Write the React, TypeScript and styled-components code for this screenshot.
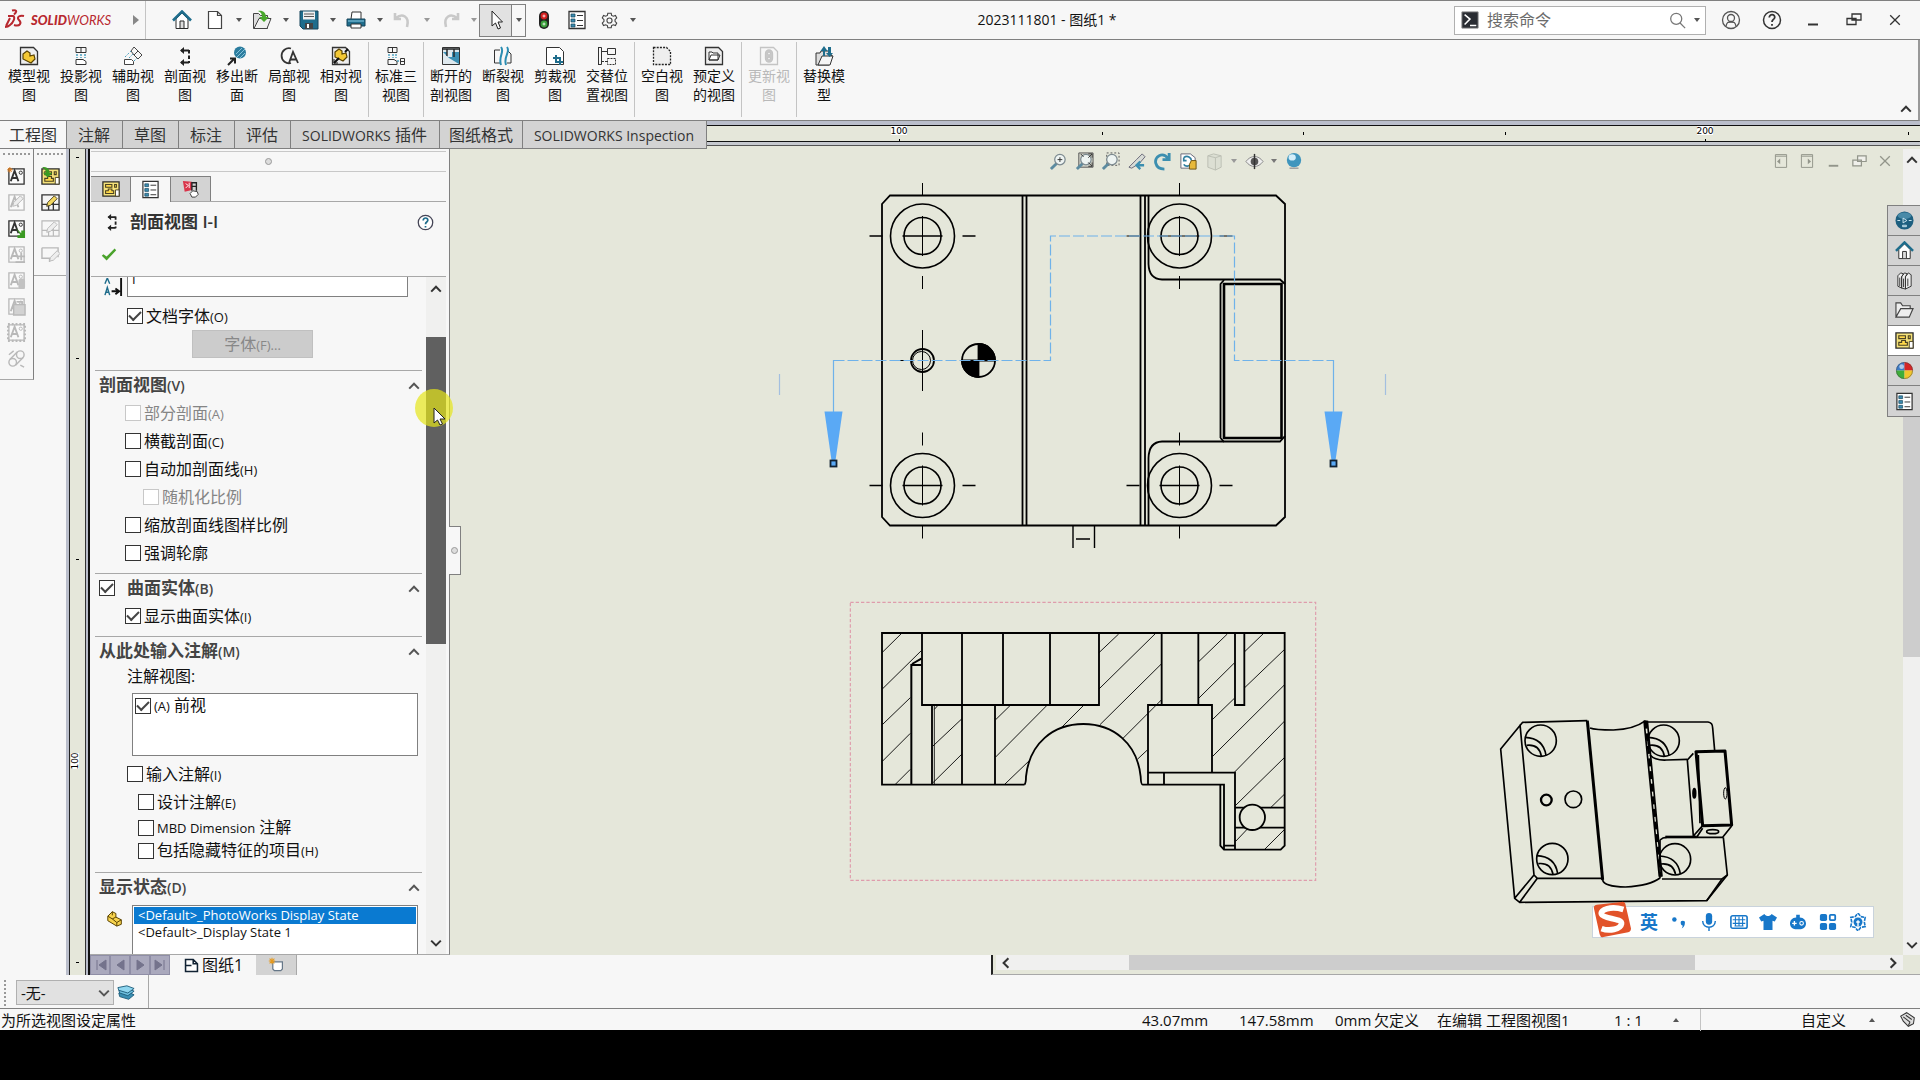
import React from "react";
import styled, { createGlobalStyle, css } from "styled-components";

const C = {
  ui: "#f7f7f7",
  sheet: "#e5e7da",
  tab: "#d3d3d3",
  line: "#a8a8a8",
  dark: "#808080",
  teal: "#1f6d8c",
  ink: "#2b2b2b",
  off: "#b9b9b9",
  blue: "#5aa9f5",
};

const Global = createGlobalStyle`
  * { box-sizing: border-box; }
  body { margin: 0; background: #000; }
  body, button, input, select {
    font-family: "Open Sans", "Noto Sans CJK SC", sans-serif;
    color: #111;
  }
  ul { list-style: none; margin: 0; padding: 0; }
  svg { display: block; flex: none; }
`;

const Page = styled.div`
  min-height: 100vh;
  padding-bottom: 50px;
  display: flex;
  flex-direction: column;
  overflow: hidden;
  background: #000;
`;

const Frame = styled.div`
  flex: 1;
  display: flex;
  flex-direction: column;
  background: ${C.ui};
  border-top: 1px solid ${C.dark};
`;

const Plain = styled.button`
  border: 0;
  padding: 0;
  background: transparent;
  display: flex;
  align-items: center;
  justify-content: center;
`;

/* ---------- icons ---------- */

type IconName =
  | "home" | "new" | "open" | "save" | "print" | "undo" | "redo" | "cursor" | "light" | "options" | "gear"
  | "model" | "proj" | "aux" | "section" | "removed" | "detail" | "relative" | "three" | "brokenOut" | "break"
  | "crop" | "alt" | "blank" | "predef" | "update" | "replace"
  | "noteNew" | "noteEdit" | "noteOut" | "noteAdd" | "noteLight" | "notePaste" | "noteFrame" | "link"
  | "sheetIn" | "sheetEdit" | "sheetOff" | "sheetNote" | "sheet" | "ball" | "x3d" | "books" | "folder" | "red"
  | "part" | "user" | "help" | "helpBlue" | "min" | "restore" | "close" | "search" | "term"
  | "zFit" | "zAll" | "zArea" | "prev" | "rotate" | "view3d" | "cube" | "eye" | "sphere"
  | "dockL" | "dockR" | "page" | "pageAdd" | "layers" | "tagIcon" | "check" | "sizeA"
  | "punct" | "mic" | "keys" | "shirt" | "game" | "apps" | "ai";

const noteA = (c: string) => (
  <g stroke={c} fill="none">
    <path d="M2 2h16v16H2z" fill="#fff" fillOpacity=".4" strokeWidth="1.400" />
    <path d="M4 15l4-11 4 11M5.500 11.500h5" strokeWidth="2" />
    <circle cx="14.500" cy="6" r="1.700" />
  </g>
);
const sheetY = (
  <g>
    <path d="M1 2h18v16H1z" fill="#f5e27a" stroke={C.ink} strokeWidth="1.400" />
    <path d="M4 5h7v3H4zM14 5h2v3h-2zM4 15v-3h3V10h4v2h2v3z" fill="#ffd94a" stroke="#4a4223" strokeWidth="1.200" />
    <path d="M15 11h4v7h-4z" fill="#fff" stroke="#4a4223" />
  </g>
);
const partY = (x = 0, y = 0) => (
  <path transform={`translate(${x} ${y})`} d="M4 6l4-3 3 2v3l4-1 1 4-4 4-8-4z" fill="#f4c935" stroke="#5a4300" strokeWidth="1.200" />
);
const pen = (c: string, f: string) => <path d="M6 14l1-4 7-7 3 3-7 7z" fill={f} stroke={c} />;
const mag = (
  <g>
    <path d="M2 18l6-6" stroke="#5c8ba0" strokeWidth="3" />
    <circle cx="11.500" cy="8" r="5.500" fill="#eef4f2" stroke="#7c8a90" strokeWidth="1.300" />
  </g>
);

const ICONS: Record<IconName, React.ReactNode> = {
  home: (
    <g>
      <path d="M4 9v9.500h12V9l-6-6z" fill="#fff" stroke={C.ink} />
      <path d="M1 10.500L10 1.500l9 9" stroke={C.teal} strokeWidth="2.600" fill="none" />
      <path d="M8 18v-7h4v7" stroke={C.ink} fill="#ddd" />
    </g>
  ),
  new: <path d="M3.500 1.500h9l4 4v13h-13zM12.500 1.500v4h4" fill="#fff" stroke="#444" strokeWidth="1.200" />,
  open: (
    <g>
      <path d="M1.500 18.500V3.500h5l2 2h7v13z" fill="#ddd" stroke="#444" />
      <path d="M2 18.500L7 8.500h12l-4 10z" fill="#f1f1f1" stroke="#444" />
      <path d="M6 1c5-1 8 2 8 6h3l-5 5-5-5h3c0-3-1-5-4-6z" fill="#49a82c" />
    </g>
  ),
  save: (
    <g>
      <path d="M1 1h18v18H4l-3-3z" fill={C.teal} stroke="#16455a" />
      <path d="M4 1.500h12v8H4z" fill="#f0f0f0" />
      <path d="M5 4h10M5 6.500h10" stroke="#555" />
      <path d="M6 13h8v6H6z" fill="#444" />
      <path d="M8 14h2v4H8z" fill="#fff" />
    </g>
  ),
  print: (
    <g>
      <path d="M5 9l1-7h9v7" fill="#fff" stroke="#333" />
      <path d="M1 9h18v7H1z" fill={C.teal} stroke="#16455a" />
      <path d="M5 14h10v4H5z" fill="#fff" stroke="#333" />
      <path d="M2 11h16" stroke="#8fd0e8" />
    </g>
  ),
  undo: <path d="M2 3v6h6M3 8c6-5 14-2 11 9" fill="none" stroke="#c9c9c9" strokeWidth="2.600" />,
  redo: <path d="M18 3v6h-6M17 8C11 3 3 6 6 17" fill="none" stroke="#c9c9c9" strokeWidth="2.600" />,
  cursor: <path d="M6 1v15l3.500-3 2.500 6 2.500-1-2.500-6h4.500z" fill="#fff" stroke="#222" />,
  light: (
    <g>
      <rect x="5" y="1" width="10" height="18" rx="5" fill="#222" />
      <circle cx="10" cy="6" r="3.400" fill="#d42020" />
      <circle cx="10" cy="14" r="3.400" fill="#3ca03c" />
      <path d="M8.500 6h3M10 4.500v3M8.500 14h3M10 12.500v3" stroke="#fff" strokeWidth=".8" />
    </g>
  ),
  options: (
    <g>
      <path d="M2 1.500h16v17H2z" fill="#fff" stroke="#333" strokeWidth="1.300" />
      <path d="M4 4h4v3H4zM4 9h4v3H4zM4 14h4v3H4z" fill="#3b8bb0" stroke="#16455a" strokeWidth=".7" />
      <path d="M10 5.500h6M10 10.500h6M10 15.500h6" stroke="#333" />
    </g>
  ),
  gear: (
    <g fill="none" stroke="#444" strokeWidth="1.300">
      <circle cx="10" cy="10" r="3" />
      <path d="M8 1.500h4l.5 2.500 2 1 2.500-1 1.500 3-2 2v2l2 2-1.500 3-2.500-1-2 1-.5 2.500H8L7.500 16l-2-1-2.500 1-1.500-3 2-2V9l-2-2L3 4l2.500 1 2-1z" />
    </g>
  ),
  model: (
    <g>
      <path d="M1.500 1.500h13l4 4v13h-17z" fill="#eee" stroke="#333" strokeWidth="1.300" />
      {partY(0, 2)}
    </g>
  ),
  proj: (
    <g fill="none" stroke="#333">
      <path d="M5 1.500h10v5H5zM10 1.500v5" />
      <path d="M6 8v4M10 8v4M14 8v4" stroke="#49a0bf" strokeWidth="1.500" strokeDasharray="2 1" />
      <path d="M5 13.500h7l3 2v3H5z" fill="#fff" />
    </g>
  ),
  aux: (
    <g fill="none" stroke="#444">
      <path d="M1.500 13.500h7l2 2v3h-9z" fill="#fff" />
      <path d="M11 1l4 4-4 4-3-4zM15 5l4 4-4 4-4-4z" />
      <path d="M2 11l6-6M6 12l4-4M11 15l3-3" stroke="#49a0bf" strokeDasharray="2 1.500" />
    </g>
  ),
  section: (
    <g fill="none" stroke="#222" strokeWidth="2">
      <path d="M14 4.500H6M14 16.500H6" />
      <path d="M9 1L5 4.500 9 8zM9 13l-4 3.500L9 20z" fill="#222" stroke="none" />
      <path d="M14 4v13" strokeDasharray="3.500 2" />
    </g>
  ),
  removed: (
    <g>
      <circle cx="13" cy="6.500" r="6" fill="#2b7c9e" />
      <path d="M9 8l6-6M10 11l8-8M13 12l5-5" stroke="#9cd3e8" strokeWidth=".8" />
      <path d="M1 19l6-6M3 12.500h5v5" stroke="#222" strokeWidth="2" fill="none" />
    </g>
  ),
  detail: (
    <g fill="none" stroke="#333">
      <path d="M12 2.500A7.500 7.500 0 1 0 12 17" strokeWidth="1.800" />
      <path d="M10 17l4-11 5 11M11.500 13.500h6" strokeWidth="1.800" />
    </g>
  ),
  relative: (
    <g>
      <path d="M1.500 1.500h13l4 4v13h-17z" fill="#eee" stroke="#333" strokeWidth="1.300" />
      {partY(0, 0)}
      <path d="M3 17l5-5M17 3l-3 3" stroke="#111" strokeWidth="2" />
      <path d="M3 13v4h4" fill="none" stroke="#111" />
    </g>
  ),
  three: (
    <g fill="none" stroke="#333">
      <path d="M2 1.500h9v5H2zM6.500 1.500v5" />
      <path d="M3 8v4M7 8v4M10 8v4M11 15h3" stroke="#49a0bf" strokeWidth="1.400" strokeDasharray="2 1" />
      <path d="M2 13.500h6l3 2v3H2zM14.500 12.500h4v6h-4zM14.500 15.500h4" />
    </g>
  ),
  brokenOut: (
    <g>
      <path d="M1.500 1.500h17v17h-17z" fill="#dfe9ee" stroke="#333" />
      <path d="M2 6h4v5h5V6h7v12L8 12z" fill="#3b8fb3" />
      <path d="M1 3h18M6 3v7M13 3v8" stroke="#222" strokeWidth="1.400" />
    </g>
  ),
  break: (
    <g fill="none">
      <path d="M7 4H1.500v13H7M14 4l4 4v9h-4" stroke="#333" />
      <path d="M8 1c4 5-3 9 0 18M14 1c4 5-4 9-1 18" stroke="#2b8db3" strokeWidth="2" />
    </g>
  ),
  crop: (
    <g fill="none">
      <path d="M1.500 1.500h13l4 4v13h-17z" fill="#fff" stroke="#333" />
      <path d="M11 9v7h7M8 12h7v7" stroke={C.teal} strokeWidth="2" />
    </g>
  ),
  alt: (
    <g fill="none" stroke="#333">
      <path d="M1.500 1v18M1.500 1.500h3v17h-3" />
      <path d="M10.500 2.500h8v6h-8zM5 5.500h5" />
      <path d="M10.500 12.500h8v6h-8zM5 15.500h5" strokeDasharray="2 1" />
    </g>
  ),
  blank: <path d="M1.500 1.500h13l4 4v13h-17z" fill="#eee" stroke="#222" strokeWidth="1.300" strokeDasharray="2 1.200" />,
  predef: (
    <g>
      <path d="M1.500 1.500h13l4 4v13h-17z" fill="#eee" stroke="#333" strokeWidth="1.300" />
      <path d="M5 14V6h3l1 1h5v7zM5 14l2-5h9l-2 5z" fill="#fff" stroke="#333" />
    </g>
  ),
  update: (
    <g fill="none" stroke="#c4c4c4" strokeWidth="1.300">
      <path d="M1.500 1.500h13l4 4v13h-17z" />
      <rect x="6.500" y="4" width="7" height="12" rx="3.500" fill="#c9c9c9" />
      <circle cx="10" cy="7.500" r="1.500" fill="#f7f7f7" />
      <circle cx="10" cy="12.500" r="1.500" fill="#f7f7f7" />
    </g>
  ),
  replace: (
    <g>
      <path d="M2 19V7h4l1-2h8v4h3l-3 10z" fill="#ddd" stroke="#333" />
      <path d="M4 19l4-9h11l-3 9z" fill="#f5f5f5" stroke="#333" />
      <path d="M9 10V5H6.500L10 0l3.500 5H11v5zM14 1v6h-2l3.500 4L19 7h-2V1z" fill={C.teal} />
    </g>
  ),
  noteNew: <g>{noteA("#333")}<path d="M3 0v6M0 3h6M1 1l4 4M5 1L1 5" stroke="#e08020" /></g>,
  noteEdit: <g>{noteA(C.off)}{pen(C.off, "#eee")}</g>,
  noteOut: <g>{noteA("#333")}<path d="M10 10l5 5V12h4v8h-8v-3h3z" fill="#3a9a22" /></g>,
  noteAdd: <g>{noteA(C.off)}<path d="M15 8v8M11 12h8M9 18h10" stroke={C.off} strokeWidth="2" /></g>,
  noteLight: <g>{noteA(C.off)}<rect x="12" y="8" width="7" height="11" rx="3" fill="#c2c2c2" /></g>,
  notePaste: <g>{noteA(C.off)}<path d="M7 8h12v11H7zM10 5h6v3" fill="#d2d2d2" stroke={C.off} strokeWidth="1.500" /></g>,
  noteFrame: <g>{noteA(C.off)}<path d="M1 1h18v18H1z" fill="none" stroke={C.off} strokeWidth="2.500" strokeDasharray="2 2" /></g>,
  link: (
    <g fill="none" stroke={C.off} strokeWidth="1.500">
      <circle cx="6" cy="14" r="4" /><circle cx="14" cy="6" r="4" />
      <path d="M3 11l8-8M9 17l8-8M2 6l5-4M14 17l4 2" />
    </g>
  ),
  sheetIn: <g>{sheetY}<path d="M1 0c6 0 8 2 8 6h3l-5 5-5-5h3c0-3-1-4-4-6z" fill="#3a9a22" /></g>,
  sheetEdit: <g><path d="M1 2h18v16H1zM1 12h18M8 12v6M13 9v9" fill="#f5f5f5" stroke="#333" strokeWidth="1.400" />{pen("#4a4223", "#f4d860")}</g>,
  sheetOff: <g><path d="M1 2h18v16H1zM1 12h18M8 12v6M13 9v9" fill="none" stroke={C.off} strokeWidth="1.200" />{pen(C.off, "#eee")}</g>,
  sheetNote: <g><path d="M1 3h17v10M1 3v11h8v4" fill="none" stroke={C.off} strokeWidth="1.500" /><g transform="translate(3 3)">{pen(C.off, "#eee")}</g></g>,
  sheet: sheetY,
  ball: (
    <g>
      <path d="M10 10V1a9 9 0 0 0-9 9z" fill="#3c7bc8" /><path d="M10 10h9a9 9 0 0 0-9-9z" fill="#d52626" />
      <path d="M10 10H1a9 9 0 0 0 9 9z" fill="#3fae3a" /><path d="M10 10v9a9 9 0 0 0 9-9z" fill="#f2c62c" />
      <circle cx="7" cy="6" r="2.500" fill="#fff" opacity=".6" />
      <circle cx="10" cy="10" r="8.500" fill="none" stroke="#444" opacity=".5" />
    </g>
  ),
  x3d: (
    <g>
      <circle cx="10" cy="10" r="9.500" fill="#1d5f80" /><ellipse cx="10" cy="5" rx="7" ry="3.500" fill="#5c9db9" opacity=".7" />
      <path d="M8.500 7.500l4 2.500-4 2.500zM8 15h4v1.500H8z" stroke="#cfe8f2" fill="none" />
      <path d="M2.500 10h3M14.500 10h3" stroke="#cfe8f2" />
    </g>
  ),
  books: (
    <g fill="#eee" stroke="#333">
      <path d="M3 5l3-3 3 1-2 3v12l-4-2zM7 6l3-4 3 1-2 3v13l-4-1zM11 6l3-4 3 2v12l-6 3z" />
      <path d="M5 7v9M9 8v9M13.500 8v8" />
    </g>
  ),
  folder: <path d="M1 17V2h5l2 3h8v3M1 17L6 8h13l-4 9z" fill="#eee" stroke="#444" strokeWidth="1.200" />,
  red: (
    <g>
      <path d="M1 1l10 1v9l-8 2z" fill="#d9344a" />
      <path d="M4 4l3 2-3 3M8 3v6" stroke="#fff" fill="none" />
      <path d="M11 12V3h5v9M11 7h5" stroke="#222" fill="none" strokeWidth="1.500" />
      <path d="M9 15l3-3 5 1 1 3-3 3h-4z" fill="#fff" stroke="#333" />
    </g>
  ),
  part: (
    <g stroke="#5a4300" strokeWidth="1.100">
      <path d="M2 8l5-5 4 2v4l6 3v5l-5 2-10-6z" fill="#f7d34c" />
      <path d="M2 8l5 3 4-2M7 11l5 4 5-3M12 15v4M7 3v4" fill="none" />
    </g>
  ),
  user: (
    <g fill="none" stroke="#555" strokeWidth="1.300">
      <circle cx="10" cy="10" r="8.500" /><circle cx="10" cy="8" r="3.500" /><path d="M5 16c1-4 2-4 5-4s4 0 5 4" />
    </g>
  ),
  help: <g><circle cx="10" cy="10" r="8.500" fill="none" stroke="#333" strokeWidth="1.500" /><path d="M7.300 7.500c0-4 5.800-3.500 5.400 0-.2 2-2.700 2-2.700 4.500M10 14v1.800" fill="none" stroke="#333" strokeWidth="1.800" /></g>,
  helpBlue: <g><circle cx="10" cy="10" r="8.500" fill="#fff" stroke="#445" strokeWidth="1.500" /><path d="M7.300 7.500c0-4 5.800-3.500 5.400 0-.2 2-2.700 2-2.700 4.500M10 14v1.800" fill="none" stroke={C.teal} strokeWidth="2" /></g>,
  min: <path d="M5 14.500h10" stroke="currentColor" strokeWidth="2" />,
  restore: <path d="M8 4h9v6H8zM3 8.500h9v6H3z" fill={C.ui} fillOpacity=".6" stroke="currentColor" strokeWidth="1.300" />,
  close: <path d="M4 4l12 12M16 4L4 16" stroke="currentColor" strokeWidth="1.600" />,
  search: <g fill="none" stroke="#777" strokeWidth="1.500"><circle cx="8.500" cy="8" r="6.500" /><path d="M13 13l6 6" /></g>,
  term: <g><path d="M1 1h18v18H1z" fill="#2a2d33" stroke="#888" /><path d="M4 4l6 5-6 6M10 16h7" fill="none" stroke="#fff" strokeWidth="1.700" /></g>,
  zFit: <g>{mag}<path d="M9 8h5M11.500 5.500v5" stroke="#333" /></g>,
  zAll: <g><path d="M4 1h15v15H4z" fill="#d5d7cc" stroke="#555" />{mag}<path d="M14 2h4v4M18 11v4h-4M6 2l3 3M18 2l-4 4M18 15l-4-4" fill="none" stroke="#333" /></g>,
  zArea: <g><path d="M6 1h13v13H6z" fill="none" stroke="#555" strokeDasharray="2 2" />{mag}</g>,
  prev: <g><path d="M2 16l8-8 6-6 3 3-6 7-8 5z" fill="#d8dcd6" stroke="#667" /><path d="M18 14h-7M14 10l-4 4 4 4" stroke="#3c8fb0" strokeWidth="2.500" fill="none" /></g>,
  rotate: <path d="M17 1v7h-7M16 7C10-1 1 5 3 12c1 4 5 6 9 6" fill="none" stroke="#3c8fb0" strokeWidth="3" />,
  view3d: <g><path d="M2 2h10l5 4v11H2z" fill="#fff" stroke="#667" /><path d="M5 6c4-3 8 0 8 3M5 13c2 3 6 2 7 0M5 6v3h3" fill="none" stroke="#2f7f9f" strokeWidth="1.800" /><path d="M13 9h5v9h-7v-5z" fill="#e7b93a" stroke="#6d5210" /></g>,
  cube: <g fill="#dcdfd3" stroke="#bcbfb3"><path d="M3 4l6-2 8 2v12l-6 3-8-3z" /><path d="M11 6v13M3 4l8 2 6-2" fill="none" /></g>,
  eye: <g><path d="M1 10c5-7 13-7 18 0-5 7-13 7-18 0z" fill="#eee" stroke="#888" /><circle cx="10" cy="10" r="4" fill="#555" /><path d="M10 2v16" stroke="#333" strokeWidth="1.500" /></g>,
  sphere: <g><circle cx="10" cy="9" r="8" fill="#3f95bd" /><ellipse cx="8" cy="6" rx="4" ry="3.500" fill="#d3eefa" /><path d="M5 18h10" stroke="#999" strokeWidth="1.500" /></g>,
  dockL: <g fill="none" stroke="currentColor" strokeWidth="1.200"><path d="M3 2h14v16H3zM3 4h14" /><path d="M9 7v7l-4-3.500z" fill="currentColor" stroke="none" /></g>,
  dockR: <g fill="none" stroke="currentColor" strokeWidth="1.200"><path d="M3 2h14v16H3zM3 4h14" /><path d="M11 7v7l4-3.500z" fill="currentColor" stroke="none" /></g>,
  page: <path d="M3 3h9l5 5v9H3zM12 3v5h5M3 10h7" fill="#fff" stroke="#123" strokeWidth="1.800" />,
  pageAdd: <g><path d="M6 6h12v9l-2 2H8l-2-2z" fill="#fff" stroke="#678" strokeWidth="1.500" /><path d="M5 1v8M1 5h8M2 2l6 6M8 2L2 8" stroke="#e59a20" strokeWidth="1.300" /></g>,
  layers: <g stroke="#1b5a78"><path d="M2 10l9-2 8 4-6 5-10-3z" fill="#3b8fb3" /><path d="M2 7l9-3 8 4-7 5-9-3z" fill="#6fc0df" /><path d="M1 4l10-2 8 3-7 5-10-3z" fill="#8fd6ef" /></g>,
  tagIcon: <g fill="#ddd" stroke="#333" strokeWidth="1.200"><path d="M2 6l7-4 9 6-1 7-6 3-6-6z" /><path d="M5 7l8 6M8 5l7 5M13 13l-2 4" fill="none" /></g>,
  check: <path d="M1 11l6 6L19 4l-2-2L7 12l-4-3z" fill="#4aa32c" />,
  sizeA: <g fill="none" stroke={C.teal} strokeWidth="1.500"><path d="M1 6l2.500-6L6 6M1 18l2.500-8L6 18M2 15h3" /><path d="M8 14h8M12 11l4 3-4 3M18 0v19" stroke="#111" strokeWidth="2" /></g>,
  punct: <g fill="#1777c9"><circle cx="4.500" cy="6" r="3" /><path d="M13 11a2.800 2.800 0 1 1 5.500 0c0 3-2 6-4.500 7 1-1 1.500-2 1.500-4-1.500 0-2.500-1.500-2.500-3z" /></g>,
  mic: <g fill="#1777c9"><rect x="6.500" y="0" width="7" height="13" rx="3.500" /><path d="M3 9c0 9 14 9 14 0M10 16v4" fill="none" stroke="#1777c9" strokeWidth="1.600" /></g>,
  keys: <g fill="none" stroke="#1777c9"><rect x="1" y="3" width="18" height="14" rx="2" strokeWidth="1.800" /><path d="M3 7.500h14M3 11.500h14M6 4v10M10 4v10M14 4v10M5 14.500h10" strokeWidth="1.200" /></g>,
  shirt: <path d="M6 1c2 3 6 3 8 0l6 4-2.500 4.500L15 8.500V19H5V8.500L2.500 9.500 0 5z" fill="#1777c9" />,
  game: <g><path d="M8 5V2h4v3c9 0 9 13 1 13H7C-1 18-1 5 8 5z" fill="#1777c9" /><path d="M3.500 11.500h5M6 9v5" stroke="#fff" strokeWidth="1.500" /><circle cx="14" cy="11.500" r="2" fill="none" stroke="#fff" strokeWidth="1.200" /></g>,
  apps: <g fill="#1777c9"><rect x="1" y="1" width="8" height="8" rx="2" /><rect x="12" y="2" width="6" height="6" rx="1" fill="none" stroke="#1777c9" strokeWidth="2" /><rect x="1" y="11" width="8" height="8" rx="2" /><rect x="11" y="11" width="8" height="8" rx="2" /></g>,
  ai: <g><path d="M10 0l3 4 5 1-1 5 1 5-5 1-3 4-3-4-5-1 1-5-1-5 5-1z" fill="none" stroke="#1777c9" strokeWidth="1.800" strokeDasharray="4 1" /><circle cx="10" cy="10" r="5" fill="#1777c9" /><path d="M10 8v7M8 10h4" stroke="#fff" strokeWidth="1.500" /></g>,
};

const Icon = ({ name, size = 20 }: { name: IconName; size?: number }) => (
  <svg width={size} height={size} viewBox="0 0 20 20" aria-hidden="true">{ICONS[name]}</svg>
);

const Chevron = ({ dir = "up", color = "#333" }: { dir?: "up" | "down" | "left" | "right"; color?: string }) => {
  const d = { up: "M1 8l4-4 4 4", down: "M1 3l4 4 4-4", left: "M7 1L3 5l4 4", right: "M3 1l4 4-4 4" }[dir];
  return <svg width="12" height="12" viewBox="0 0 10 10" aria-hidden="true"><path d={d} fill="none" stroke={color} strokeWidth="1.700" /></svg>;
};

const Caret = ({ up = false, color = "#555" }: { up?: boolean; color?: string }) => (
  <svg width="6" height="4" viewBox="0 0 6 4" aria-hidden="true"><path d={up ? "M0 4h6L3 0z" : "M0 0h6L3 4z"} fill={color} /></svg>
);

/* ---------- title bar ---------- */

const TitleBar = styled.header`
  height: 39px;
  display: flex;
  align-items: center;
  border-bottom: 1px solid ${C.dark};
`;
const Brand = styled.div`
  width: 146px;
  height: 100%;
  padding: 0 6px 0 4px;
  display: flex;
  align-items: center;
  gap: 5px;
  border-right: 1px solid #c4c4c4;
  color: #b8282f;
`;
const BrandName = styled.span`
  flex: 1;
  font: italic 400 13px/20px "Lato", sans-serif;
  b { font-weight: 900; }
`;
const QuickBar = styled.div`
  display: flex;
  align-items: center;
  padding-left: 25px;
`;
const QuickButton = styled(Plain)<{ $w?: number }>`
  width: ${(p) => p.$w ?? 22}px;
  height: 32px;
`;
const SelectTool = styled.div`
  display: flex;
  margin: 0 1px 0 4px;
  border: 1px solid ${C.dark};
  button { height: 31px; }
  button:first-child { width: 32px; background: #e2e2e2; border-right: 1px solid ${C.dark}; }
  button:last-child { width: 13px; }
`;
const DocTitle = styled.h1`
  flex: 1;
  margin: 0;
  text-align: center;
  font-size: 14px;
  line-height: 20px;
  font-weight: 400;
`;
const SearchBox = styled.label`
  width: 252px;
  height: 29px;
  display: flex;
  align-items: center;
  gap: 8px;
  padding: 0 5px 0 6px;
  background: #fff;
  border: 1px solid #b0b0b0;
  input {
    flex: 1;
    min-width: 0;
    padding: 0;
    border: 0;
    outline: 0;
    font-size: 16px;
    line-height: 20px;
    background: transparent;
  }
  input::placeholder { color: #6b6b6b; opacity: 1; }
`;
const WindowButtons = styled.div`
  display: flex;
  padding: 0 5px 0 4px;
  color: #333;
  button { width: 41px; height: 32px; color: inherit; }
`;

/* ---------- ribbon ---------- */

const Ribbon = styled.div`
  height: 81px;
  display: flex;
  padding-left: 2px;
  border-bottom: 1px solid ${C.dark};
  border-right: 2px solid #999;
`;
const RibbonGroup = styled.div`
  display: flex;
  margin: 2px 0 3px;
  padding: 0 1px;
  border-right: 1px solid #c4c4c4;
  &:last-of-type { border-right: 0; }
`;
const RibbonButton = styled(Plain)`
  width: 52px;
  padding-top: 4px;
  flex-direction: column;
  justify-content: flex-start;
  font-size: 14px;
  line-height: 19px;
  &:disabled { color: ${C.off}; }
  span { width: 42px; }
`;
const Collapse = styled(Plain)`
  margin-left: auto;
  width: 24px;
  height: 24px;
  align-self: flex-end;
`;

const ribbon: [IconName, string, boolean?][][] = [
  [["model", "模型视图"], ["proj", "投影视图"], ["aux", "辅助视图"], ["section", "剖面视图"], ["removed", "移出断面"], ["detail", "局部视图"], ["relative", "相对视图"]],
  [["three", "标准三视图"]],
  [["brokenOut", "断开的剖视图"], ["break", "断裂视图"], ["crop", "剪裁视图"], ["alt", "交替位置视图"]],
  [["blank", "空白视图"], ["predef", "预定义的视图"]],
  [["update", "更新视图", true]],
  [["replace", "替换模型"]],
];

/* ---------- tabs and ruler ---------- */

const TabRow = styled.div`
  display: flex;
  height: 28px;
  background: ${C.sheet};
`;
const Tabs = styled.nav`
  display: flex;
  border-bottom: 1px solid ${C.dark};
`;
const Tab = styled.button<{ $active?: boolean; $tight?: boolean }>`
  padding: ${(p) => (p.$tight ? "0 9px" : "0 12px 0 11px")};
  border: 0;
  border-right: 1px solid ${C.dark};
  background: ${(p) => (p.$active ? C.ui : C.tab)};
  font-size: 16px;
  line-height: 26px;
  white-space: nowrap;
  color: #333;
  small { font-size: 14px; line-height: 20px; }
`;
const RulerH = styled.svg`
  flex: 1 1 0;
  min-width: 0;
  height: 25px;
`;

const HorizontalRuler = () => (
  <RulerH role="img" aria-label="ruler">
    <rect width="100%" height="4" fill="#babecb" />
    <rect y="4" width="100%" height="1" fill="#111" />
    <rect y="20" width="100%" height="1" fill="#111" />
    <rect y="21" width="100%" height="4" fill="#c6c9cf" />
    <rect y="24" width="100%" height="1" fill="#555" />
    {[192, 998].map((x, i) => (
      <g key={x}>
        <rect x={x - 8} y="5" width="16" height="9" fill="#fff" />
        <text x={x} y="13" fontSize="9" textAnchor="middle" fontFamily="DejaVu Sans, sans-serif">{(i + 1) * 100}</text>
        <rect x={x} y="18" width="1" height="2" />
      </g>
    ))}
    {[395, 596, 798, 1201].map((x) => <rect key={x} x={x} y="11" width="1" height="3" />)}
  </RulerH>
);

/* ---------- body ---------- */

const Body = styled.div`
  flex: 1;
  display: flex;
  min-height: 0;
`;
const ToolColumn = styled.div<{ $side?: boolean }>`
  width: ${(p) => (p.$side ? 32 : 34)}px;
  align-self: flex-start;
  padding: 4px 0 8px;
  ${(p) => !p.$side && css`border-right: 1px solid ${C.dark};`}
  border-bottom: 1px solid ${C.line};
  button { width: 32px; height: 26px; }
`;
const Grip = styled.div<{ $vertical?: boolean }>`
  ${(p) => p.$vertical
    ? css`width: 0; height: 26px; border-left: 2px dotted #999;`
    : css`height: 0; margin: 0 3px 8px; border-top: 2px dotted #999;`}
`;
const RulerV = styled.svg`
  width: 24px;
  height: auto;
  align-self: stretch;
`;
const VerticalRuler = () => (
  <RulerV role="img" aria-label="ruler">
    <rect width="24" height="100%" fill={C.sheet} />
    <rect width="3" height="100%" fill="#babecb" />
    <rect x="3" width="1" height="100%" fill="#222" />
    <rect x="19" width="1" height="100%" fill="#333" />
    <rect x="20" width="3" height="100%" fill="#babecb" />
    <rect x="22" width="2" height="100%" fill="#111" />
    {[8, 209, 410, 813].map((y) => <rect key={y} x="10" y={y} width="3" height="1" />)}
    <rect x="5" y="604" width="8" height="16" fill="#fff" />
    <text transform="translate(12 612) rotate(-90)" fontSize="9" textAnchor="middle" fontFamily="DejaVu Sans, sans-serif">100</text>
  </RulerV>
);
const Right = styled.div`
  flex: 1;
  min-width: 0;
  display: flex;
  flex-direction: column;
`;
const Workspace = styled.div`
  position: relative;
  flex: 1;
  display: flex;
  min-height: 0;
`;

/* ---------- property panel ---------- */

const Panel = styled.aside`
  position: relative;
  z-index: 1;
  width: 360px;
  display: flex;
  flex-direction: column;
  padding: 2px 3px 0 1px;
  background: ${C.ui};
  border-right: 1px solid ${C.dark};
  border-bottom: 1px solid ${C.line};
`;
const PanelGrip = styled.div`
  height: 21px;
  display: flex;
  align-items: center;
  justify-content: center;
  border-top: 1px solid #c8c8c8;
  border-bottom: 1px solid #c8c8c8;
`;
const Dot = styled.i`
  width: 7px;
  height: 7px;
  border: 1px solid #999;
  border-radius: 50%;
  background: #ddd;
`;
const PanelTabs = styled.div`
  display: flex;
  margin-top: 4px;
  height: 26px;
  border-bottom: 1px solid ${C.line};
`;
const PanelTab = styled(Plain)<{ $active?: boolean }>`
  width: 40px;
  height: ${(p) => (p.$active ? 26 : 25)}px;
  background: ${(p) => (p.$active ? C.ui : C.tab)};
  border: solid ${C.dark};
  border-width: 1px 1px 0 0;
`;
const PanelHead = styled.div`
  height: 75px;
  padding: 8px 12px 0 10px;
  border-bottom: 1px solid ${C.line};
`;
const PanelTitle = styled.div`
  display: flex;
  align-items: center;
  height: 24px;
  padding-left: 2px;
  h2 {
    flex: 1;
    margin: 0 0 0 9px;
    font-size: 17px;
    line-height: 24px;
    font-weight: 600;
    color: #333;
  }
`;
const PanelOk = styled(Plain)`
  margin-top: 13px;
`;
const PanelScroll = styled.div`
  flex: 1 1 0;
  min-height: 0;
  display: flex;
  overflow: hidden;
`;
const PanelContent = styled.div`
  flex: 1;
  min-width: 0;
  overflow: hidden;
  padding: 0 4px;
`;
const FontBlock = styled.div`
  margin-top: -16px;
  padding-bottom: 12px;
`;
const ScaleRow = styled.label`
  display: flex;
  align-items: flex-end;
  gap: 4px;
  padding: 0 14px 5px 9px;
  input {
    flex: 1;
    height: 36px;
    padding: 0 4px;
    border: 1px solid ${C.dark};
    background: #fff;
    font-size: 13px;
  }
`;
const FontButton = styled.button`
  display: block;
  width: 121px;
  height: 28px;
  margin-left: 97px;
  padding: 0;
  border: 1px solid #c0c0c0;
  background: #ccc;
  color: #888;
  font-size: 16px;
  line-height: 24px;
  small { font-size: 13px; }
`;
const Section = styled.section<{ $pad?: number }>`
  border-top: 1px solid ${C.line};
  padding-bottom: ${(p) => p.$pad ?? 6}px;
`;
const SectionHead = styled.div`
  height: 28px;
  display: flex;
  align-items: center;
  padding: 0 2px 0 4px;
  font-weight: 500;
  h3 {
    flex: 1;
    margin: 0;
    font-size: 17px;
    line-height: 24px;
    font-weight: 600;
    color: #444;
  }
  small { font-size: 14px; }
  input { margin-right: 12px; }
`;
const Option = styled.label<{ $indent?: number; $tight?: boolean; $off?: boolean }>`
  height: ${(p) => (p.$tight ? 23 : 28)}px;
  display: flex;
  align-items: center;
  gap: 3px;
  padding-left: ${(p) => p.$indent ?? 30}px;
  font-size: 16px;
  line-height: 24px;
  white-space: nowrap;
  color: ${(p) => (p.$off ? "#858585" : "#111")};
  small { font-size: 13px; }
`;
const Tick = styled.input.attrs({ type: "checkbox" })`
  appearance: none;
  flex: none;
  width: 16px;
  height: 16px;
  margin: 0;
  display: grid;
  place-content: center;
  border: 1px solid #333;
  background: #fff;
  &:checked::after {
    content: "";
    width: 10px;
    height: 5px;
    margin-bottom: 3px;
    border: solid #444;
    border-width: 0 0 2px 2px;
    transform: rotate(-45deg);
  }
  &:disabled { border-color: #c8c8c8; }
`;
const FieldLabel = styled.div`
  height: 24px;
  padding-left: 32px;
  font-size: 16px;
  line-height: 22px;
`;
const ViewList = styled.div`
  height: 63px;
  margin: 4px 4px 4px 37px;
  border: 1px solid ${C.dark};
  background: #fff;
`;
const StateRow = styled.div`
  display: flex;
  gap: 8px;
  padding: 4px 4px 0 11px;
  svg { margin-top: 4px; }
`;
const StateList = styled.ul`
  flex: 1;
  height: 70px;
  padding: 1px;
  border: 1px solid ${C.dark};
  background: #fff;
`;
const StateItem = styled.li<{ $selected?: boolean }>`
  height: 17px;
  padding-left: 4px;
  font-size: 13px;
  line-height: 17px;
  ${(p) => p.$selected && css`background: #0a7ad1; color: #fff;`}
`;
const SideHandle = styled(Plain)`
  position: absolute;
  left: 100%;
  top: 377px;
  width: 12px;
  height: 49px;
  border: 1px solid ${C.dark};
  border-left: 0;
  background: ${C.ui};
`;

/* ---------- scroll bars ---------- */

const Scroll = styled.div<{ $x?: boolean; $size: number; $arrow: number }>`
  flex: ${(p) => (p.$x ? "1 1 0" : "none")};
  ${(p) => (p.$x ? `height: ${p.$size}px;` : `width: ${p.$size}px;`)}
  display: flex;
  flex-direction: ${(p) => (p.$x ? "row" : "column")};
  background: #f0f0ef;
  button { flex: 0 0 ${(p) => p.$arrow}px; }
`;
const Track = styled.div<{ $x?: boolean; $parts: string }>`
  flex: 1;
  display: grid;
  ${(p) => (p.$x ? `grid-template-columns: ${p.$parts};` : `grid-template-rows: ${p.$parts};`)}
`;
const Thumb = styled.div<{ $x?: boolean; $dark?: boolean }>`
  ${(p) => (p.$x ? "grid-column: 2;" : "grid-row: 2;")}
  background: ${(p) => (p.$dark ? "#606060" : "#cdcdcd")};
`;

/* ---------- drawing area ---------- */

const Canvas = styled.main`
  position: relative;
  flex: 1;
  min-width: 0;
  overflow: hidden;
  background: ${C.sheet};
`;
const Drawing = styled.svg`
  width: 100%;
  height: 100%;
`;
const ViewTools = styled.div`
  position: absolute;
  left: 595px;
  top: 0;
  display: flex;
  align-items: center;
  height: 24px;
  button { width: 26px; height: 24px; }
  button.drop { width: 14px; }
`;
const DocButtons = styled.div`
  position: absolute;
  right: 5px;
  top: 0;
  display: flex;
  color: #92958a;
  button { width: 26px; height: 24px; color: inherit; }
`;
const TaskPane = styled.div`
  position: absolute;
  right: 0;
  top: 56px;
  width: 33px;
  border: 1px solid ${C.dark};
  border-right: 0;
`;
const TaskButton = styled(Plain)<{ $active?: boolean }>`
  width: 100%;
  height: 30px;
  background: ${(p) => (p.$active ? "#fff" : C.tab)};
  border-bottom: 1px solid ${C.dark};
  &:last-child { border-bottom: 0; }
`;
const ImeBar = styled.div`
  position: absolute;
  right: 29px;
  bottom: 17px;
  height: 32px;
  width: 282px;
  padding-left: 41px;
  display: flex;
  align-items: center;
  background: #fff;
  border: 1px solid #c9d3dc;
  button { width: 30px; height: 30px; }
`;
const ImeLogo = styled.svg`
  position: absolute;
  left: -1px;
  top: -6px;
  width: 40px;
  height: 38px;
`;
const ImeMode = styled(Plain)`
  font-size: 18px;
  line-height: 24px;
  font-weight: 700;
  color: #1777c9;
`;
const Pointer = styled.svg`
  position: absolute;
  z-index: 2;
  left: 324px;
  top: 239px;
  width: 40px;
  height: 40px;
`;

const Bore = ({ x, y, blue = false }: { x: number; y: number; blue?: boolean }) => (
  <g>
    <circle cx={x} cy={y} r="32" strokeWidth="1.600" />
    <circle cx={x} cy={y} r="18.500" strokeWidth="1.600" />
    <path d={`M${x} ${y - 53}v13M${x} ${y - 20}v40M${x} ${y + 40}v13`} strokeWidth="1" />
    <path d={`M${x - 53} ${y}h13M${x - 20} ${y}h40M${x + 40} ${y}h13`} strokeWidth={blue ? 1 : 1.4} />
  </g>
);

const TopView = () => (
  <g fill="none" stroke="#000" strokeWidth="1.800">
    <path d="M890 195.500H1276L1285 204V517L1276 525.500H890L882 517V204Z" />
    <path d="M1022.500 196V526M1026.500 196V526M1140.500 196V526M1145 196V526" />
    <path d="M1148.500 196V264Q1149 279 1162 279.500H1280L1285 284M1148.500 526V458Q1149 442 1162 441.500H1280L1285 436" />
    <path d="M1220.500 438V284L1224 280M1220.500 438L1224 442" />
    <path d="M1224 284H1281.500V438H1224Z" strokeWidth="2.600" />
    <Bore x={922.5} y={236} />
    <Bore x={922.5} y={485.5} />
    <Bore x={1179.5} y={236} blue />
    <Bore x={1179.5} y={485.5} />
    <circle cx="922.500" cy="360.500" r="11.500" />
    <circle cx="921.500" cy="360.500" r="9" strokeWidth="1" />
    <path d="M922.500 330V391M900 360.500h5M946 360.500h4" strokeWidth="1" />
    <circle cx="978.500" cy="360.500" r="16.500" />
    <path d="M978.500 360.500V344a16.500 16.500 0 0 1 16.500 16.500zM978.500 360.500V377A16.500 16.500 0 0 1 962 360.500z" fill="#000" />
    <path d="M1073 526V548M1094.500 526V548M1076 539H1090" strokeWidth="1.400" />
    <g stroke="#6fb2ea" strokeWidth="1.200">
      <path d="M833.500 360.500H1050.500V236H1234.500V360.500H1333.500" strokeDasharray="11 3" />
      <path d="M833.500 360V412M1333.500 360V412" />
      <path d="M779.500 374V395M1385.500 374V395" stroke="#a3bfe0" />
    </g>
    {[833.5, 1333.5].map((x) => (
      <g key={x} stroke="none">
        <path d={`M${x - 9} 411.500h18l-7 49h-4z`} fill={C.blue} />
        <rect x={x - 3} y="460.500" width="6" height="6" fill="#5aa9f5" stroke="#123" />
      </g>
    ))}
  </g>
);

const HATCH = [
  "183 132 127 187", "244 182 127 297", "211 323 127 404", "211 430 127 514", "211 538 166 583",
  "293 347 283 358", "366 386 279 468", "366 492 279 578", "510 347 467 389", "620 347 467 501",
  "730 347 664 413", "570 510 494 583", "836 132 777 188", "945 132 777 297", "964 222 780 404",
  "964 330 848 446", "922 480 892 508", "1162 132 1075 216", "1183 219 1075 326", "1183 325 1117 389",
  "1269 132 1213 186", "1334 178 1213 294", "1334 284 1117 500", "1334 393 1183 547", "1334 502 1185 648",
  "1334 612 1292 653", "1226 713 1187 754", "1334 718 1273 779",
].map((s) => {
  const [a, b, c, d] = s.split(" ");
  return `M${a} ${b}L${c} ${d}`;
}).join("");

const SectionView = () => (
  <g transform="translate(840 590) scale(0.33333)" fill="none" stroke="#000" strokeWidth="5.500">
    <rect x="31" y="37" width="1396" height="834" stroke="#df9cac" strokeWidth="3.500" strokeDasharray="10 6" />
    <path d={HATCH} strokeWidth="2.700" />
    <path d="M553 584H126V129H1334V767L1322 779H1152L1141 767V584" />
    <path d="M553 584Q558 580 558 560C568 460 640 402 730 402S892 460 902 560Q903 584 908 584H1152V779" />
    <path d="M246 129V345H777V129M366 129V584M489 129V345M630 129V345M465 345V584M276 345V584" />
    <path d="M283 345V584" strokeWidth="2.500" />
    <path d="M214 584V225H244M216 222L244 206" strokeWidth="6" />
    <path d="M965 129V345M1075 129V345M924 584V345H1116V548M924 548H1185V779M972 548V584" />
    <path d="M1185 129V345H1213V129M1152 767H1185M1185 653H1334M1185 713H1334" />
    <circle cx="1237" cy="682" r="38" fill={C.sheet} />
  </g>
);

const IsoBore = ({ x, y }: { x: number; y: number }) => (
  <g>
    <circle cx={x} cy={y} r="47" />
    <path d={`M${x - 47} ${y - 10}Q${x + 8} ${y - 8} ${x + 16} ${y + 44}M${x - 42} ${y + 14}Q${x - 5} ${y + 10} ${x + 2} ${y + 46}`} />
  </g>
);

const IsoView = () => (
  <g transform="translate(1480 700) scale(0.33333)" fill="none" stroke="#000" strokeWidth="5" strokeLinejoin="round">
    <path d="M322 62L128 67L62 147L104 595L119 607L680 602L742 525L730 412M120 73L162 525L104 595M162 525L172 535L119 607M172 535H368" />
    <path d="M322 62L368 540" strokeWidth="9" />
    <path d="M330 84Q345 90 400 90Q462 88 497 62M368 540Q372 560 436 561Q510 557 540 534M680 602L726 537" />
    <path d="M492 62L538 530M502 62L546 530" />
    <path d="M497 62L542 530" strokeWidth="8" strokeDasharray="24 14" />
    <path d="M502 66H684Q698 68 698 84L704 152M510 165Q525 182 560 180L622 178M540 420Q548 412 560 412M540 420V535M546 537H726L742 525" />
    <path d="M556 411H650" strokeWidth="8" />
    <path d="M648 155L735 153L755 375L668 377Z" strokeWidth="9" />
    <path d="M640 160L622 180L640 408L668 377M650 412L668 385M640 408L650 412H728L755 378M655 165L660 370" />
    <ellipse cx="698" cy="395" rx="18" ry="6" />
    <ellipse cx="643" cy="280" rx="4" ry="14" fill="#000" />
    <ellipse cx="736" cy="280" rx="5" ry="17" strokeWidth="3" />
    <IsoBore x={182} y={122} />
    <IsoBore x={551} y={122} />
    <IsoBore x={217} y={477} />
    <IsoBore x={585} y={478} />
    <circle cx="199" cy="300" r="16" strokeWidth="7" />
    <circle cx="280" cy="298" r="25" />
  </g>
);

/* ---------- bottom bars ---------- */

const SheetBar = styled.div`
  height: 20px;
  display: grid;
  grid-template-columns: minmax(0, 901fr) minmax(0, 929fr);
`;
const SheetTabs = styled.div`
  display: flex;
`;
const SheetNav = styled(Plain)`
  width: 20px;
  border: 1px solid #8f8ea6;
  background: #aaa9bd;
`;
const SheetTab = styled(Plain)`
  width: 86px;
  gap: 2px;
  font-size: 16px;
  line-height: 20px;
`;
const SheetAdd = styled(Plain)`
  width: 41px;
  background: ${C.tab};
  border-right: 1px solid ${C.line};
`;
const ScrollHolder = styled.div`
  display: flex;
  align-items: flex-start;
  padding: 0 17px 0 3px;
  border-left: 2px solid #222;
  border-bottom: 1px solid ${C.line};
  background: ${C.sheet};
`;
const LayerBar = styled.div`
  height: 34px;
  display: flex;
  align-items: center;
  border-bottom: 1px solid ${C.dark};
`;
const LayerGroup = styled.div`
  width: 149px;
  height: 100%;
  display: flex;
  align-items: center;
  padding: 2px 0 0 4px;
  border-right: 1px solid ${C.line};
`;
const LayerSelect = styled.label`
  display: grid;
  width: 98px;
  height: 25px;
  margin: 0 3px 0 10px;
  align-items: center;
  select, svg { grid-area: 1 / 1; }
  select {
    appearance: none;
    width: 100%;
    height: 100%;
    padding: 0 4px;
    border: 1px solid #b0b0b0;
    border-radius: 0;
    background: #e1e1e1;
    font-size: 15px;
  }
  svg { justify-self: end; margin-right: 4px; pointer-events: none; }
`;
const StatusBar = styled.footer`
  height: 21px;
  display: flex;
  align-items: center;
  padding-right: 4px;
  font-size: 15px;
  line-height: 22px;
  white-space: nowrap;
`;
const StatusText = styled.span`
  flex: 1;
  padding-left: 1px;
`;
const StatusCell = styled.span<{ $w: number; $line?: boolean }>`
  width: ${(p) => p.$w}px;
  ${(p) => p.$line && css`border-right: 1px solid #c4c4c4;`}
`;

const Check = ({ text, k, indent, tight, on = false, off = false }: { text: string; k?: string; indent?: number; tight?: boolean; on?: boolean; off?: boolean }) => (
  <Option $indent={indent} $tight={tight} $off={off}>
    <Tick defaultChecked={on} disabled={off} />
    <span>{text}{k && <small>({k})</small>}</span>
  </Option>
);

const Heading = ({ text, k }: { text: string; k: string }) => (
  <>
    <h3>{text}<small>({k})</small></h3>
    <Plain aria-label="collapse"><Chevron color="#555" /></Plain>
  </>
);

const quick: { name: IconName; faded?: boolean }[] = [
  { name: "new" }, { name: "open" }, { name: "save" }, { name: "print" }, { name: "undo", faded: true }, { name: "redo", faded: true },
];

export default function App() {
  return (
    <Page>
      <Global />
      <Frame>
        <TitleBar>
          <Brand>
            <svg width="22" height="22" viewBox="0 0 22 22" fill="none" stroke="#b8282f" strokeWidth="2" aria-hidden="true">
              <path d="M8 1.500c4-1 6 .5 2 4M4 7h5c3 1 0 7-3 9-2 2-4 2-5 2M6 9L2 17" />
              <path d="M20 7c-4-1-8 1-5 4s1 7-5 5" />
            </svg>
            <BrandName><b>SOLID</b>WORKS</BrandName>
            <svg width="6" height="10" viewBox="0 0 6 10" aria-hidden="true"><path d="M0 0v10l6-5z" fill="#888" /></svg>
          </Brand>
          <QuickBar>
            <QuickButton aria-label="home"><Icon name="home" /></QuickButton>
            {quick.map(({ name, faded }) => (
              <React.Fragment key={name}>
                <QuickButton $w={44} aria-label={name}><Icon name={name} /></QuickButton>
                <QuickButton $w={3} aria-label={`${name} list`}><Caret color={faded ? "#999" : "#555"} /></QuickButton>
              </React.Fragment>
            ))}
            <SelectTool>
              <Plain aria-label="select"><Icon name="cursor" /></Plain>
              <Plain aria-label="select list"><Caret /></Plain>
            </SelectTool>
            <QuickButton $w={33} aria-label="rebuild"><Icon name="light" /></QuickButton>
            <QuickButton $w={33} aria-label="properties"><Icon name="options" /></QuickButton>
            <QuickButton $w={33} aria-label="options"><Icon name="gear" size={17} /></QuickButton>
            <QuickButton $w={14} aria-label="options list"><Caret /></QuickButton>
          </QuickBar>
          <DocTitle>2023111801 - 图纸1 *</DocTitle>
          <SearchBox>
            <Icon name="term" size={18} />
            <input placeholder="搜索命令" aria-label="搜索命令" />
            <Icon name="search" size={17} />
            <Caret />
          </SearchBox>
          <WindowButtons>
            {(["user", "help", "min", "restore", "close"] as IconName[]).map((n) => (
              <Plain key={n} aria-label={n}><Icon name={n} size={n === "close" ? 16 : 20} /></Plain>
            ))}
          </WindowButtons>
        </TitleBar>

        <Ribbon>
          {ribbon.map((g, i) => (
            <RibbonGroup key={i}>
              {g.map(([icon, label, off]) => (
                <RibbonButton key={label} disabled={off}>
                  <Icon name={icon} />
                  <span>{label}</span>
                </RibbonButton>
              ))}
            </RibbonGroup>
          ))}
          <Collapse aria-label="collapse ribbon"><Chevron /></Collapse>
        </Ribbon>

        <TabRow>
          <Tabs>
            <Tab $active $tight>工程图</Tab>
            <Tab>注解</Tab>
            <Tab>草图</Tab>
            <Tab>标注</Tab>
            <Tab>评估</Tab>
            <Tab><small>SOLIDWORKS</small> 插件</Tab>
            <Tab $tight>图纸格式</Tab>
            <Tab><small>SOLIDWORKS Inspection</small></Tab>
          </Tabs>
          <HorizontalRuler />
        </TabRow>

        <Body>
          <ToolColumn>
            <Grip />
            {(["noteNew", "noteEdit", "noteOut", "noteAdd", "noteLight", "notePaste", "noteFrame", "link"] as IconName[]).map((n) => (
              <Plain key={n} aria-label={n}><Icon name={n} size={19} /></Plain>
            ))}
          </ToolColumn>
          <ToolColumn $side>
            <Grip />
            {(["sheetIn", "sheetEdit", "sheetOff", "sheetNote"] as IconName[]).map((n) => (
              <Plain key={n} aria-label={n}><Icon name={n} size={19} /></Plain>
            ))}
          </ToolColumn>
          <VerticalRuler />
          <Right>
            <Workspace>
              <Panel>
                <PanelGrip><Dot /></PanelGrip>
                <PanelTabs>
                  <PanelTab aria-label="sheet"><Icon name="sheet" size={18} /></PanelTab>
                  <PanelTab $active aria-label="properties"><Icon name="options" size={19} /></PanelTab>
                  <PanelTab aria-label="config"><Icon name="red" size={18} /></PanelTab>
                </PanelTabs>
                <PanelHead>
                  <PanelTitle>
                    <Icon name="section" size={18} />
                    <h2>剖面视图 I-I</h2>
                    <Plain aria-label="help"><Icon name="helpBlue" size={17} /></Plain>
                  </PanelTitle>
                  <PanelOk aria-label="ok"><Icon name="check" size={16} /></PanelOk>
                </PanelHead>
                <PanelScroll>
                  <PanelContent>
                    <FontBlock>
                      <ScaleRow>
                        <Icon name="sizeA" size={19} />
                        <input defaultValue="I" aria-label="标号" />
                      </ScaleRow>
                      <Check text="文档字体" k="O" indent={32} on />
                      <FontButton disabled>字体<small>(F)...</small></FontButton>
                    </FontBlock>
                    <Section>
                      <SectionHead><Heading text="剖面视图" k="V" /></SectionHead>
                      <Check text="部分剖面" k="A" off />
                      <Check text="横截剖面" k="C" />
                      <Check text="自动加剖面线" k="H" />
                      <Check text="随机化比例" indent={48} off />
                      <Check text="缩放剖面线图样比例" />
                      <Check text="强调轮廓" />
                    </Section>
                    <Section>
                      <SectionHead><Tick defaultChecked aria-label="曲面实体" /><Heading text="曲面实体" k="B" /></SectionHead>
                      <Check text="显示曲面实体" k="I" on />
                    </Section>
                    <Section $pad={10}>
                      <SectionHead><Heading text="从此处输入注解" k="M" /></SectionHead>
                      <FieldLabel>注解视图:</FieldLabel>
                      <ViewList>
                        <Option $indent={2} $tight>
                          <Tick defaultChecked />
                          <span><small>(A)</small> 前视</span>
                        </Option>
                      </ViewList>
                      <Check text="输入注解" k="I" indent={32} />
                      <Check text="设计注解" k="E" indent={43} />
                      <Option $indent={43} $tight>
                        <Tick />
                        <span><small>MBD Dimension</small> 注解</span>
                      </Option>
                      <Check text="包括隐藏特征的项目" k="H" indent={43} tight />
                    </Section>
                    <Section>
                      <SectionHead><Heading text="显示状态" k="D" /></SectionHead>
                      <StateRow>
                        <Icon name="part" size={18} />
                        <StateList role="listbox">
                          <StateItem role="option" aria-selected="true" $selected>{"<Default>_PhotoWorks Display State"}</StateItem>
                          <StateItem role="option" aria-selected="false">{"<Default>_Display State 1"}</StateItem>
                        </StateList>
                      </StateRow>
                    </Section>
                  </PanelContent>
                  <Scroll $size={20} $arrow={22}>
                    <Plain aria-label="up"><Chevron /></Plain>
                    <Track $parts="38fr 306fr 288fr"><Thumb $dark /></Track>
                    <Plain aria-label="down"><Chevron dir="down" /></Plain>
                  </Scroll>
                </PanelScroll>
                <SideHandle aria-label="hide panel"><Dot /></SideHandle>
              </Panel>

              <Canvas>
                <Drawing role="img" aria-label="drawing">
                  <g transform="translate(-450 -149)">
                    <TopView />
                    <SectionView />
                    <IsoView />
                  </g>
                </Drawing>
                <ViewTools>
                  {(["zFit", "zAll", "zArea", "prev", "rotate", "view3d", "cube"] as IconName[]).map((n) => (
                    <Plain key={n} aria-label={n}><Icon name={n} size={19} /></Plain>
                  ))}
                  <Plain className="drop" aria-label="display list"><Caret color="#999" /></Plain>
                  <Plain aria-label="eye"><Icon name="eye" size={19} /></Plain>
                  <Plain className="drop" aria-label="eye list"><Caret color="#777" /></Plain>
                  <Plain aria-label="sphere"><Icon name="sphere" size={18} /></Plain>
                </ViewTools>
                <DocButtons>
                  {(["dockL", "dockR", "min", "restore", "close"] as IconName[]).map((n) => (
                    <Plain key={n} aria-label={n}><Icon name={n} size={n === "restore" || n === "min" ? 19 : 16} /></Plain>
                  ))}
                </DocButtons>
                <ImeBar>
                  <ImeLogo viewBox="0 0 42 40" aria-hidden="true">
                    <path d="M2 8Q1 5 5 4L31 1Q34 0 35 3L41 29Q41 32 38 33L12 38Q9 39 8 35z" fill="#e2532a" />
                    <path d="M33 9C20 5 8 9 10 14S32 18 31 24 18 32 10 29" fill="none" stroke="#fff" strokeWidth="6" />
                  </ImeLogo>
                  <ImeMode>英</ImeMode>
                  {(["punct", "mic", "keys", "shirt", "game", "apps", "ai"] as IconName[]).map((n) => (
                    <Plain key={n} aria-label={n}><Icon name={n} size={n === "punct" ? 15 : 18} /></Plain>
                  ))}
                </ImeBar>
              </Canvas>

              <Scroll $size={17} $arrow={20}>
                <Plain aria-label="up"><Chevron /></Plain>
                <Track $parts="130fr 358fr 278fr"><Thumb /></Track>
                <Plain aria-label="down"><Chevron dir="down" /></Plain>
              </Scroll>

              <TaskPane>
                {(["x3d", "home", "books", "folder", "sheet", "ball", "options"] as IconName[]).map((n) => (
                  <TaskButton key={n} $active={n === "sheet"} aria-label={n}><Icon name={n} size={19} /></TaskButton>
                ))}
              </TaskPane>

              <Pointer viewBox="0 0 40 40" aria-hidden="true">
                <circle cx="20" cy="20" r="19" fill="#e6e619" opacity=".7" />
                <path d="M20 20v15l3.500-3 2.500 5 2.500-1-2.500-5h5z" fill="#fff" stroke="#222" />
              </Pointer>
            </Workspace>

            <SheetBar>
              <SheetTabs>
                {["M13 2v10L6 7zM4 2v10", "M11 2v10L4 7z", "M4 2v10l7-5z", "M2 2v10l7-5zM11 2v10"].map((d) => (
                  <SheetNav key={d} aria-label="sheet navigation">
                    <svg width="14" height="14" viewBox="0 0 14 14"><path d={d} fill="#74738c" stroke="#74738c" /></svg>
                  </SheetNav>
                ))}
                <SheetTab><Icon name="page" size={17} />图纸1</SheetTab>
                <SheetAdd aria-label="add sheet"><Icon name="pageAdd" size={16} /></SheetAdd>
              </SheetTabs>
              <ScrollHolder>
                <Scroll $x $size={15} $arrow={20}>
                  <Plain aria-label="left"><Chevron dir="left" /></Plain>
                  <Track $x $parts="113fr 567fr 188fr"><Thumb $x /></Track>
                  <Plain aria-label="right"><Chevron dir="right" /></Plain>
                </Scroll>
              </ScrollHolder>
            </SheetBar>
          </Right>
        </Body>

        <LayerBar>
          <LayerGroup>
            <Grip $vertical />
            <LayerSelect>
              <select aria-label="图层"><option>-无-</option></select>
              <Chevron dir="down" color="#555" />
            </LayerSelect>
            <Plain aria-label="layers"><Icon name="layers" size={18} /></Plain>
          </LayerGroup>
        </LayerBar>

        <StatusBar>
          <StatusText>为所选视图设定属性</StatusText>
          <StatusCell $w={97}>43.07mm</StatusCell>
          <StatusCell $w={96}>147.58mm</StatusCell>
          <StatusCell $w={39}>0mm</StatusCell>
          <StatusCell $w={63}>欠定义</StatusCell>
          <StatusCell $w={177}>在编辑 工程图视图1</StatusCell>
          <StatusCell $w={59}>1 : 1</StatusCell>
          <Plain aria-label="scale list"><Caret up /></Plain>
          <StatusCell $w={22} $line>&nbsp;</StatusCell>
          <StatusCell $w={100} />
          <StatusCell $w={68}>自定义</StatusCell>
          <Plain aria-label="units list"><Caret up /></Plain>
          <StatusCell $w={24} />
          <Plain aria-label="tags"><Icon name="tagIcon" size={17} /></Plain>
        </StatusBar>
      </Frame>
    </Page>
  );
}
